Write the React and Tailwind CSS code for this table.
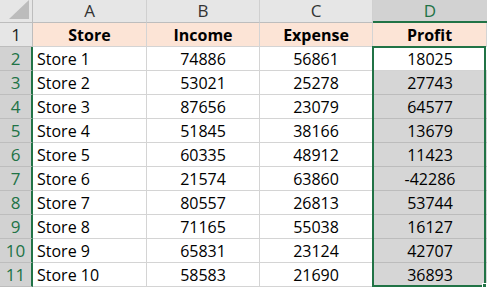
const ROWS = [
  ["Store 1", 74886, 56861, 18025],
  ["Store 2", 53021, 25278, 27743],
  ["Store 3", 87656, 23079, 64577],
  ["Store 4", 51845, 38166, 13679],
  ["Store 5", 60335, 48912, 11423],
  ["Store 6", 21574, 63860, -42286],
  ["Store 7", 80557, 26813, 53744],
  ["Store 8", 71165, 55038, 16127],
  ["Store 9", 65831, 23124, 42707],
  ["Store 10", 58583, 21690, 36893],
];

const font = { fontFamily: '"Open Sans", "Liberation Sans", sans-serif' };

export default function App() {
  return (
    <div className="relative h-[287px] w-[487px] overflow-hidden bg-white text-[16px] text-black" style={font}>
      <div className="grid grid-cols-[33px_114px_113px_113px_114px] grid-rows-[23px_repeat(11,24px)]">
        {/* column headers */}
        <div className="relative border-r border-b border-[#bdbdbd] bg-[#e6e6e6]">
          <div className="absolute bottom-[3px] right-[3px] h-0 w-0 border-b-[19px] border-l-[20px] border-b-[#bcbcbc] border-l-transparent" />
        </div>
        {["A", "B", "C"].map((c) => (
          <div key={c} className="flex items-center justify-center border-r border-b border-r-[#d0d0d0] border-b-[#bdbdbd] bg-[#e6e6e6] text-[17px] text-[#333]">
            {c}
          </div>
        ))}
        <div className="flex items-center justify-center border-b-2 border-[#217346] bg-[#d2d2d2] text-[17px] text-[#217346]">D</div>

        {/* header row */}
        <div className="flex items-center justify-center border-r border-b border-[#bdbdbd] bg-[#e6e6e6] text-[17px] text-[#222]">1</div>
        {["Store", "Income", "Expense", "Profit"].map((h) => (
          <div key={h} className="flex items-center justify-center border-r border-b border-[#d4d4d4] bg-[#fce4d6] font-bold">
            {h}
          </div>
        ))}

        {ROWS.map((r, i) => (
          <Row key={r[0]} n={i + 2} row={r} active={i === 0} />
        ))}
      </div>

      {/* selection D2:D11 */}
      <div className="pointer-events-none absolute left-[372px] top-[46px] h-[241px] w-[114px] border-2 border-[#217346]" />
      <div className="absolute left-[482px] top-[283px] h-[5px] w-[5px] border border-white bg-[#217346]" />
    </div>
  );
}

function Row({ n, row, active }) {
  const [name, income, expense, profit] = row;
  return (
    <>
      <div className="flex items-center justify-center border-r-2 border-b border-r-[#217346] border-b-[#bdbdbd] bg-[#d2d2d2] text-[17px] text-[#217346]">
        {n}
      </div>
      <div className="flex items-center border-r border-b border-[#d4d4d4] pl-[4px]">{name}</div>
      <div className="flex items-center justify-center border-r border-b border-[#d4d4d4]">{income}</div>
      <div className="flex items-center justify-center border-r border-b border-[#d4d4d4]">{expense}</div>
      <div
        className={`flex items-center justify-center border-b ${
          active ? "border-[#d4d4d4] bg-white" : "border-[#bcbcbc] bg-[#d6d6d6]"
        }`}
      >
        {profit}
      </div>
    </>
  );
}
